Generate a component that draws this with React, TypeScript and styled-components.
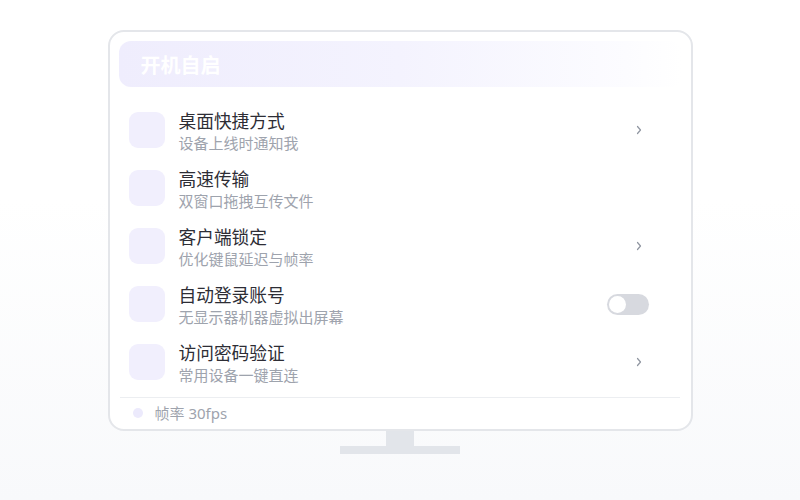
import React from "react";
import styled, { createGlobalStyle } from "styled-components";

const Global = createGlobalStyle`
  html, body { margin: 0; padding: 0; }
  body {
    width: 800px; height: 500px; overflow: hidden;
    font-family: "Noto Sans", "Noto Sans CJK SC", sans-serif;
    background: linear-gradient(180deg, #ffffff 0%, #ffffff 40%, #f8f9fb 100%);
  }
`;

const Page = styled.div`
  width: 800px;
  height: 500px;
  box-sizing: border-box;
  padding-top: 30px;
  display: flex;
  flex-direction: column;
  align-items: center;
`;

const Monitor = styled.div`
  box-sizing: border-box;
  width: 585px;
  height: 401px;
  border: 2px solid #e4e6ea;
  border-radius: 16px;
  background: #fff;
  padding: 9px 9px 0 9px;
  display: flex;
  flex-direction: column;
`;

const Header = styled.div`
  height: 46px;
  border-radius: 12px;
  background: linear-gradient(90deg, #efedfd 0%, #f4f3fe 50%, #fcfcff 90%, #ffffff 100%);
  display: flex;
  align-items: center;
  padding-left: 22px;
  font-size: 20px;
  font-weight: 700;
  color: #ffffff;
`;

const List = styled.div`
  display: flex;
  flex-direction: column;
  padding-top: 14px;
`;

const Row = styled.div`
  height: 58px;
  display: flex;
  align-items: center;
  padding-left: 10px;
  padding-right: 33px;
`;

const IconBox = styled.div`
  width: 36px;
  height: 36px;
  border-radius: 9px;
  background: #f1effd;
  flex-shrink: 0;
`;

const Texts = styled.div`
  margin-left: 14px;
  padding-top: 4px;
  flex: 1;
  display: flex;
  flex-direction: column;
`;

const Title = styled.div`
  font-size: 17.7px;
  line-height: 22px;
  color: #2d2d35;
`;

const Sub = styled.div`
  font-size: 15px;
  line-height: 22px;
  color: #9ea3ad;
`;

const Chevron = styled.svg`
  margin-right: 7px;
  width: 6px;
  height: 10px;
`;

const Toggle = styled.div`
  width: 42px;
  height: 21px;
  border-radius: 11px;
  background: #d7d9df;
  position: relative;
`;

const Knob = styled.div`
  position: absolute;
  left: 2px;
  top: 2px;
  width: 17px;
  height: 17px;
  border-radius: 50%;
  background: #fff;
`;

const Divider = styled.div`
  height: 1px;
  background: #eceef1;
  margin: 6px 2px 0 1px;
`;

const Footer = styled.div`
  flex: 1;
  display: flex;
  align-items: center;
  padding-left: 14px;
  padding-bottom: 2px;
  font-size: 15px;
  color: #9ea3ad;
`;

const Dot = styled.span`
  width: 10px;
  height: 10px;
  border-radius: 50%;
  background: #eceafc;
  margin-right: 12px;
`;

const Neck = styled.div`
  width: 28px;
  height: 15px;
  background: #e2e5ea;
`;

const Base = styled.div`
  width: 120px;
  height: 8px;
  background: #e2e5ea;
`;

type Item = { title: string; sub: string; ctrl: "chevron" | "toggle" | "none" };

const items: Item[] = [
  { title: "桌面快捷方式", sub: "设备上线时通知我", ctrl: "chevron" },
  { title: "高速传输", sub: "双窗口拖拽互传文件", ctrl: "none" },
  { title: "客户端锁定", sub: "优化键鼠延迟与帧率", ctrl: "chevron" },
  { title: "自动登录账号", sub: "无显示器机器虚拟出屏幕", ctrl: "toggle" },
  { title: "访问密码验证", sub: "常用设备一键直连", ctrl: "chevron" },
];

export default function App() {
  return (
    <>
      <Global />
      <Page>
        <Monitor>
          <Header>开机自启</Header>
          <List>
            {items.map((it) => (
              <Row key={it.title}>
                <IconBox />
                <Texts>
                  <Title>{it.title}</Title>
                  <Sub>{it.sub}</Sub>
                </Texts>
                {it.ctrl === "chevron" && (
                  <Chevron viewBox="0 0 6 10">
                    <polyline points="1.5,1.5 4.5,5 1.5,8.5" fill="none" stroke="#8f95a0" strokeWidth="1.2" strokeLinecap="round" strokeLinejoin="round" />
                  </Chevron>
                )}
                {it.ctrl === "toggle" && (
                  <Toggle>
                    <Knob />
                  </Toggle>
                )}
              </Row>
            ))}
          </List>
          <Divider />
          <Footer>
            <Dot />
            帧率 30fps
          </Footer>
        </Monitor>
        <Neck />
        <Base />
      </Page>
    </>
  );
}
